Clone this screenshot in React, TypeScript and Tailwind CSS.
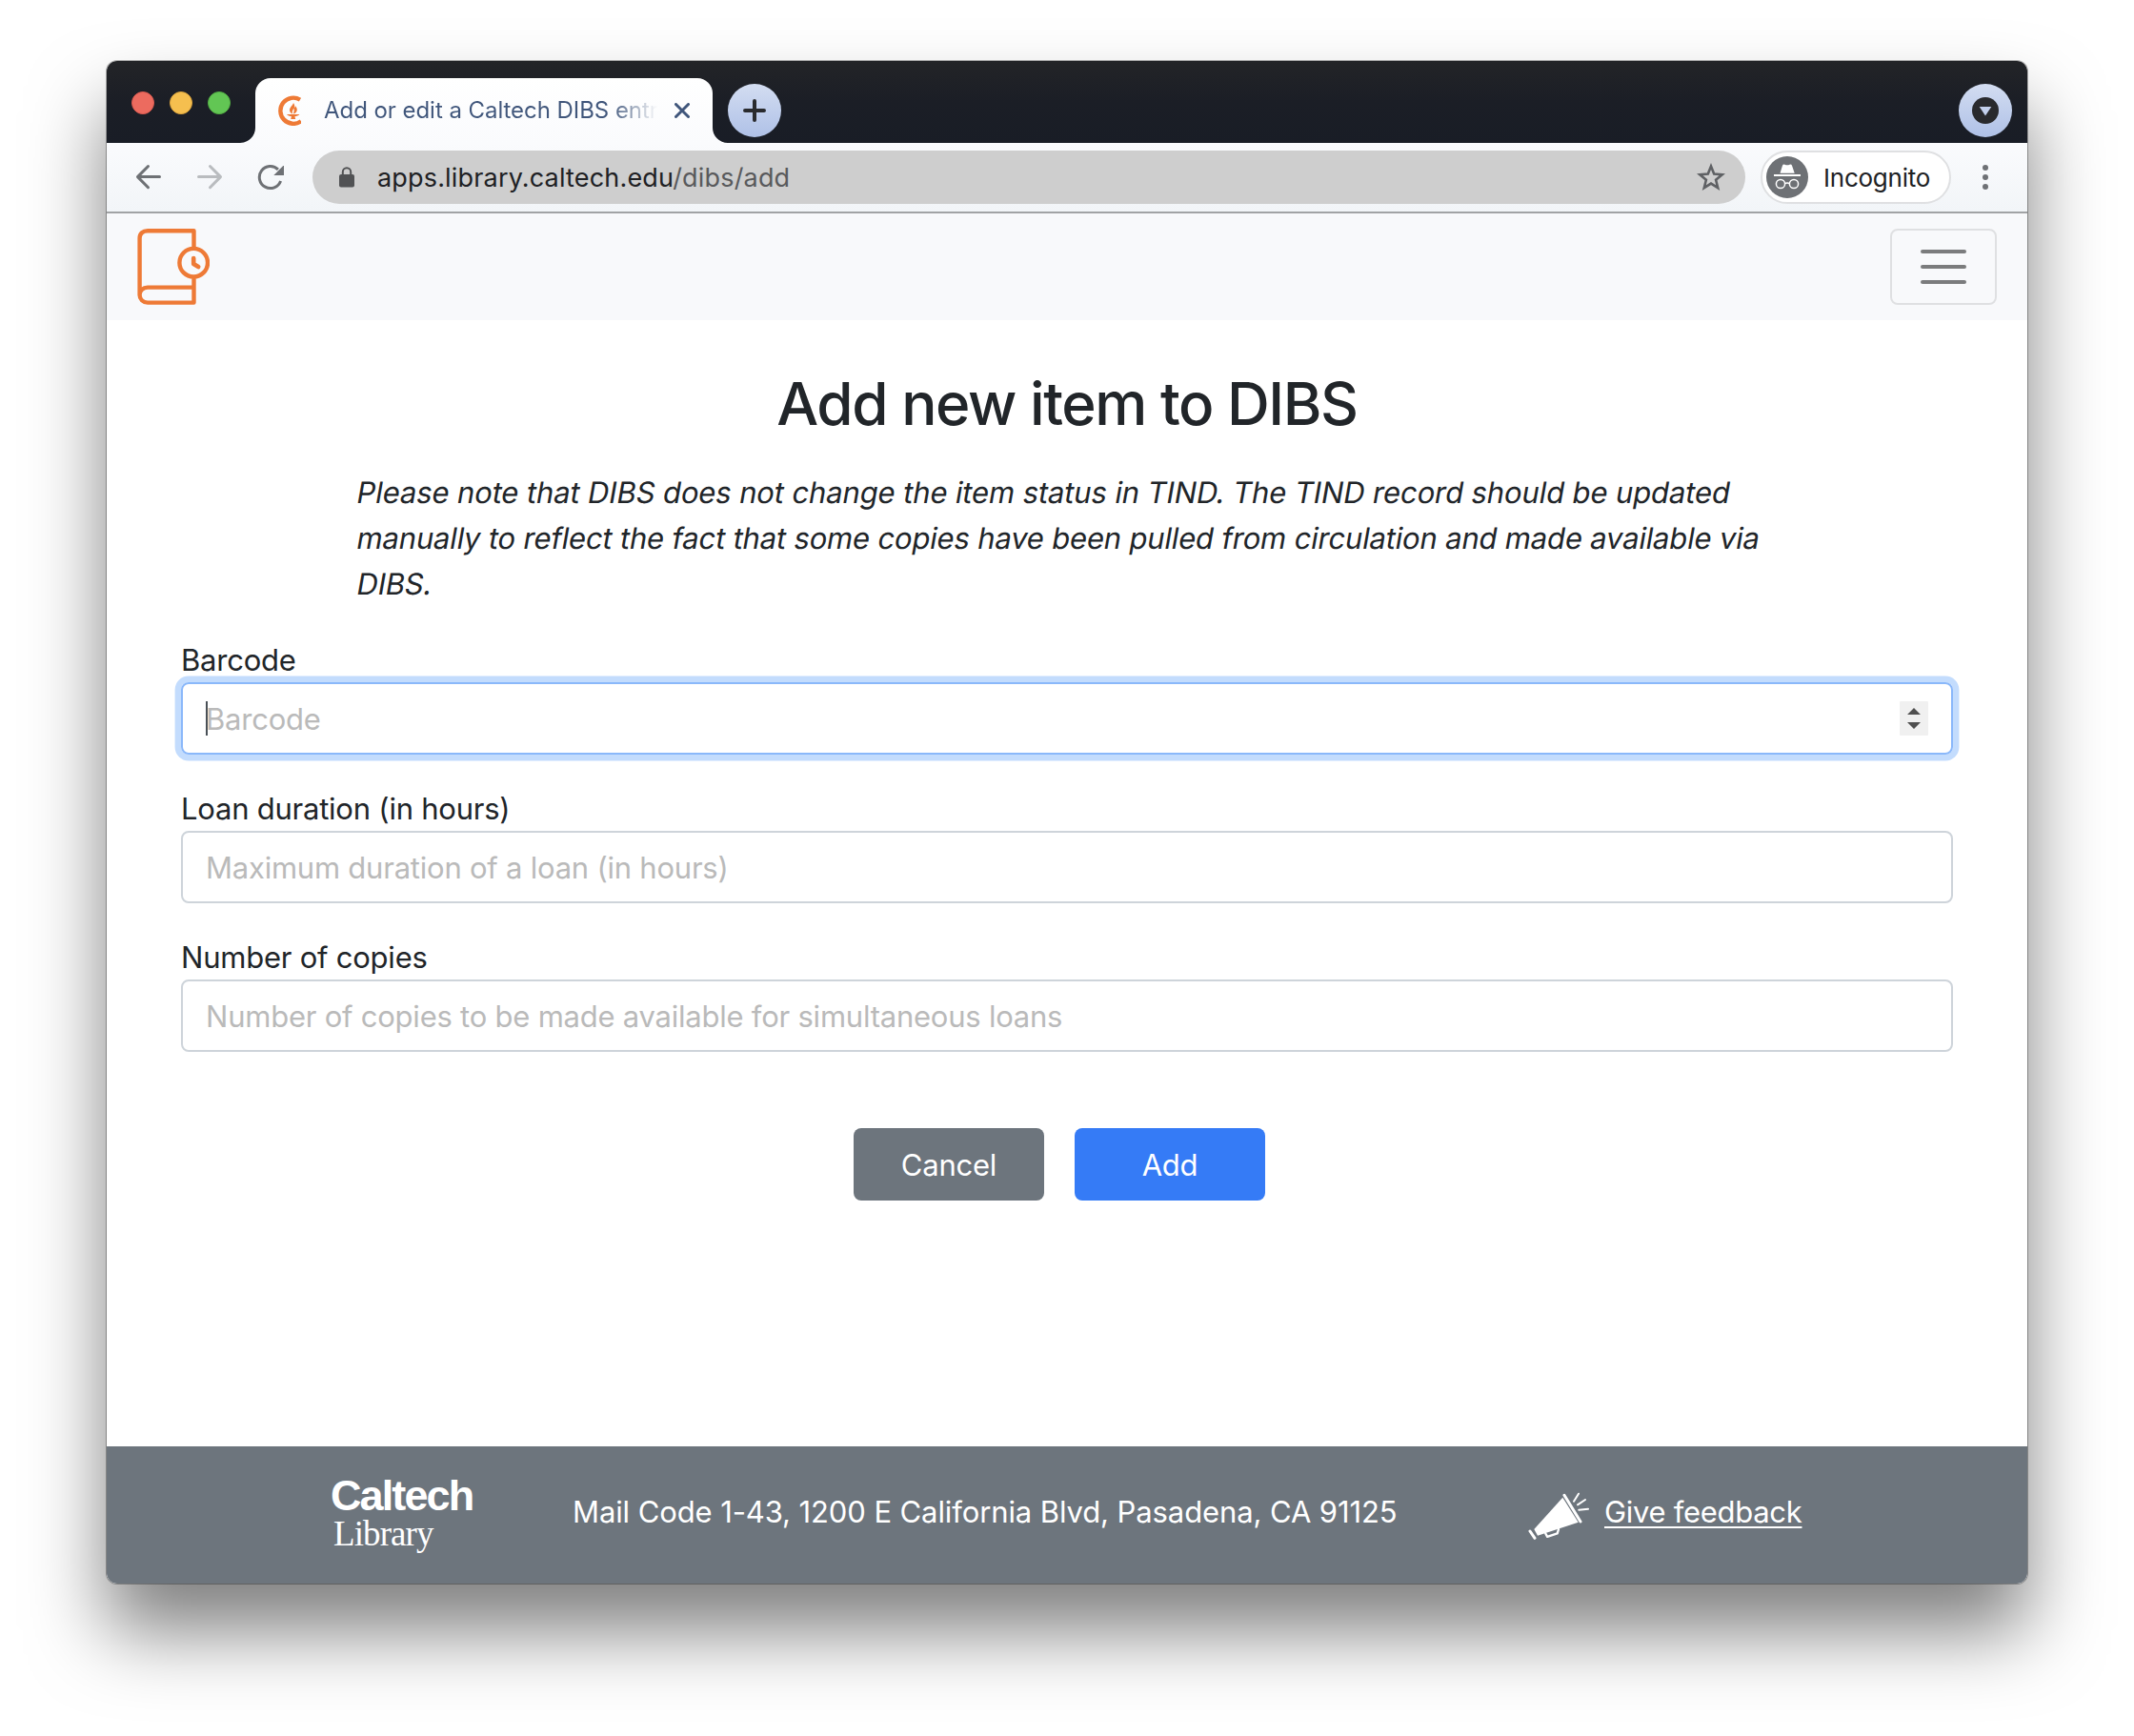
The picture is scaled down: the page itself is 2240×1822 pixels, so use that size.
import type { ReactNode } from "react";

function Favicon() {
  return (
    <svg className="h-8 w-6 shrink-0" viewBox="0 0 24 32" fill="none">
      <path d="M23 4.6A13.6 13.6 0 1 0 24 27.2" stroke="#ee7a36" strokeWidth="4.400" />
      <path d="M16 8c-.5 2.500-4 4.500-4 7.500 0 2 1.500 3.500 3.200 4-1.200-2.500.6-4 1-6 1 1.500.3 3.500-.2 6 2-.4 3.800-2 3.800-4.200 0-1.800-1-2.800-1.300-4-.2.800-.6 1.200-1.200 1.600.2-2-.3-3.700-1.300-4.900Z" fill="#ee7a36" />
      <path d="M9 20h13.400c-1.200 1.500-3 2-5 2.200l.8 2.800h-5l.8-2.800c-2-.2-3.800-.7-5-2.200Z" fill="#ee7a36" />
    </svg>
  );
}

function TabFlare({ side }: { side: "left" | "right" }) {
  return (
    <svg
      className={side === "left" ? "absolute bottom-0 -left-4 size-4" : "absolute -right-4 bottom-0 size-4"}
      viewBox="0 0 16 16"
      fill="#fafbfd"
    >
      {side === "left" ? <path d="M16 0v16H0A16 16 0 0 0 16 0Z" /> : <path d="M0 0v16h16A16 16 0 0 1 0 0Z" />}
    </svg>
  );
}

function TabStrip() {
  return (
    <div className="flex h-[86px] bg-linear-to-b from-[#232427] via-[#1b1e26] via-50% to-[#191d26] pr-4">
      <div className="flex gap-4 pt-8 pl-[26px]">
        <div className="size-6 rounded-full border border-[#dd5a50] bg-[#ec6b5f]" />
        <div className="size-6 rounded-full border border-[#dfa63c] bg-[#f5bf4f]" />
        <div className="size-6 rounded-full border border-[#52ae43] bg-[#62c654]" />
      </div>
      <div className="relative mt-[18px] ml-[26px] flex w-[480px] items-center rounded-t-2xl bg-linear-to-b from-white to-[#fafbfd] pl-6">
        <TabFlare side="left" />
        <TabFlare side="right" />
        <Favicon />
        <div className="ml-6 w-[350px] overflow-hidden bg-linear-to-r from-[#40567b] from-86% to-[#40567b]/0 bg-clip-text text-[24px] leading-9 tracking-[-0.050px] whitespace-nowrap text-transparent">
          Add or edit a Caltech DIBS entry
        </div>
        <svg className="ml-[18px] size-4 shrink-0" viewBox="0 0 16 16" stroke="#40567b" strokeWidth="3" strokeLinecap="round">
          <path d="M1.500 1.500l13 13M14.500 1.500l-13 13" />
        </svg>
      </div>
      <div className="mt-6 ml-4 flex size-14 items-center justify-center rounded-full bg-linear-to-b from-[#d3ddf1] to-[#afc1e7]">
        <svg className="size-6" viewBox="0 0 24 24" stroke="#292a2d" strokeWidth="4" strokeLinecap="round">
          <path d="M12 2v20M2 12h20" />
        </svg>
      </div>
      <div className="mt-6 ml-auto flex size-14 items-center justify-center rounded-full bg-linear-to-b from-[#d3ddf1] to-[#afc1e7]">
        <svg className="size-7" viewBox="0 0 28 28">
          <circle cx="14" cy="14" r="14" fill="#292a2d" />
          <path d="M7.700 10h12.600L14 19.500Z" fill="#c3d0ec" />
        </svg>
      </div>
    </div>
  );
}

function Incognito() {
  return (
    <svg className="size-11" viewBox="0 0 44 44">
      <circle cx="22" cy="22" r="22" fill="#6e7175" />
      <path d="M14.500 17.700 17 9.800q.7-1.900 2.500-1.100 2.500 1 5 0 1.800-.8 2.500 1.100l2.700 7.900Z" fill="#fff" />
      <path d="M8 19h28v2H8Z" fill="#fff" />
      <g fill="none" stroke="#fff" strokeWidth="1.500">
        <circle cx="15" cy="29" r="4.600" />
        <circle cx="29" cy="29" r="4.600" />
        <path d="M19.500 28.600q2.500-1.200 5 0" />
      </g>
    </svg>
  );
}

function Toolbar() {
  return (
    <div className="flex h-[74px] items-start border-b-2 border-[#a1a3a5] bg-linear-to-b from-[#fafbfd] to-[#f2f5f8] pt-2">
      <div className="flex h-14 items-center pl-[30px]">
        <svg className="size-7" viewBox="0 0 28 28" fill="none" stroke="#6e7175" strokeWidth="3" strokeLinecap="round" strokeLinejoin="round">
          <path d="M25.500 13.600H3M13.500 2.500 2.500 13.600l11 11.100" />
        </svg>
        <svg className="ml-9 size-7" viewBox="0 0 28 28" fill="none" stroke="#b9bcbf" strokeWidth="3" strokeLinecap="round" strokeLinejoin="round">
          <path d="M2.500 13.600h22.500M14.500 2.500l11 11.100-11 11.100" />
        </svg>
        <svg className="ml-9 size-7" viewBox="0 0 28 28" fill="none">
          <path d="M24.600 18A11.500 11.500 0 1 1 21.900 5.900" stroke="#6e7175" strokeWidth="3" />
          <path d="M28.300 1v11h-11Z" fill="#6e7175" />
        </svg>
      </div>
      <div className="ml-[30px] flex h-14 w-[1504px] items-center rounded-full bg-[#cecece] pr-[21px] pl-7">
        <svg className="h-[22px] w-4" viewBox="0 0 16 22">
          <rect y="8" width="16" height="13.500" rx="2" fill="#515254" />
          <path d="M3.800 9V5.500a4.200 4.200 0 0 1 8.400 0V9" fill="none" stroke="#515254" strokeWidth="2" />
        </svg>
        <div className="mt-px ml-6 text-[27px] leading-9 tracking-[0.170px] text-[#202124]">
          apps.library.caltech.edu<span className="text-[#595a5c]">/dibs/add</span>
        </div>
        <svg className="ml-auto size-[30px]" viewBox="0 0 30 30" fill="none" stroke="#5f6164" strokeWidth="2.600">
          <path d="m15 3.500 3.200 8.100 8.500.6-6.600 5.500 2.100 8.500-7.200-4.600-7.200 4.600 2.100-8.500-6.600-5.500 8.500-.6Z" />
        </svg>
      </div>
      <div className="ml-4 flex h-14 w-[200px] items-center rounded-full border-2 border-[#dfe0e2] bg-white pl-1">
        <Incognito />
        <div className="mt-px ml-4 text-[26px] leading-9 text-[#202124]">Incognito</div>
      </div>
      <div className="ml-[33px] flex h-14 flex-col items-center justify-center gap-1">
        <div className="size-1.5 rounded-full bg-[#6e7175]" />
        <div className="size-1.5 rounded-full bg-[#6e7175]" />
        <div className="size-1.5 rounded-full bg-[#6e7175]" />
      </div>
    </div>
  );
}

function NavBar() {
  return (
    <div className="flex h-28 items-center justify-between bg-[#f8f9fb] px-8">
      <svg className="h-20 w-[76px]" viewBox="0 0 76 80" fill="none" stroke="#ee7a36" strokeWidth="4.400" strokeLinecap="round" strokeLinejoin="round">
        <path d="M59.500 19V2.300H11C6 2.300 2.600 5 2.600 10v60M59.500 53v24.600H11c-5 0-8.400-3.500-8.400-8s3.400-8 8.400-8h48.500" />
        <circle cx="59.200" cy="35.700" r="14.800" />
        <path d="M59.200 31v6l5 3" strokeWidth="4.600" />
      </svg>
      <div className="flex h-20 w-28 flex-col items-center justify-center gap-3 rounded-lg border-2 border-[#dfe0e2]">
        <div className="h-1 w-12 rounded-full bg-[#7b7c7d]" />
        <div className="h-1 w-12 rounded-full bg-[#7b7c7d]" />
        <div className="h-1 w-12 rounded-full bg-[#7b7c7d]" />
      </div>
    </div>
  );
}

function Field({ label, placeholder, focused }: { label: string; placeholder: string; focused?: boolean }) {
  return (
    <div>
      <div className="h-12 pt-px leading-12">{label}</div>
      <div
        className={
          focused
            ? "flex h-[76px] items-center rounded-lg border-2 border-[#8ab8fa] pr-6 pl-6 shadow-[0_0_0_6.400px_#c3dcfd]"
            : "flex h-[76px] items-center rounded-lg border-2 border-[#ced4da] pr-6 pl-6"
        }
      >
        {focused && <div className="-mr-0.5 h-9 w-0.5 bg-[#495057]" />}
        <div className="pt-px leading-12 text-[#bababa]">{placeholder}</div>
        {focused && (
          <svg className="ml-auto h-9 w-[30px]" viewBox="0 0 30 36">
            <rect width="30" height="36" rx="1" fill="#f0f0f0" />
            <path d="M8 14h14l-7-7ZM8 22h14l-7 7Z" fill="#4f4f4f" />
          </svg>
        )}
      </div>
    </div>
  );
}

function Button({ color, children }: { color: string; children: ReactNode }) {
  return <div className={`flex h-[76px] w-[200px] items-center justify-center rounded-lg pt-0.5 text-white ${color}`}>{children}</div>;
}

function Footer() {
  return (
    <div className="mt-auto flex h-36 items-start bg-[#6d757d] pl-[235px] whitespace-nowrap text-white">
      <div className="w-[254px] pt-[29px]">
        <div className="font-['Liberation_Sans'] text-[45px] leading-[46px] font-bold tracking-[-1.900px]">Caltech</div>
        <div className="ml-[3px] font-['Liberation_Serif'] text-[37px] leading-[34px] tracking-[-0.900px]">Library</div>
      </div>
      <div className="mt-[45px] w-[1003px] leading-12 tracking-[-0.100px]">
        Mail Code 1-43, 1200 E California Blvd, Pasadena, CA 91125
      </div>
      <svg className="mt-12 h-[50px] w-16" viewBox="0 0 64 50" fill="none" stroke="#fff" strokeLinecap="round" strokeLinejoin="round">
        <path d="m6.300 39 30-33.300 16.400 26-42.700 14Z" fill="#fff" stroke="none" />
        <path d="m38 3.300 17 27.700M2 41l5 7.300" strokeWidth="3" />
        <path d="m18.300 43.500 1.900 3.400 10.500-3.500L32 39" strokeWidth="2.400" />
        <path d="m48 9.700 5-8M52 13.300 60 8M53.300 18.700l9.700-1" strokeWidth="2" />
      </svg>
      <div className="mt-[45px] ml-4 leading-12 tracking-[-0.300px] underline decoration-2 underline-offset-4">Give feedback</div>
    </div>
  );
}

export default function App() {
  return (
    <div className="h-[1822px] w-[2240px] overflow-hidden bg-white px-28 pt-16 font-['Inter',sans-serif]">
      <div className="h-[1598px] rounded-[11px] shadow-[0_0_0_1px_rgba(0,0,0,0.300),0_50px_80px_rgba(0,0,0,0.500)]">
        <div className="flex h-full flex-col overflow-hidden rounded-[11px] bg-white text-[31px] tracking-[-0.230px] text-[#212529]">
          <TabStrip />
          <Toolbar />
          <NavBar />
          <div className="mt-[49px] text-center text-[62px] leading-[77px] font-medium tracking-[-1.450px]">Add new item to DIBS</div>
          <div className="mt-[31px] pl-[263px] leading-12 whitespace-nowrap">
            <div className="origin-left -skew-x-10 tracking-[-0.120px]">
              Please note that DIBS does not change the item status in TIND. The TIND record should be updated
            </div>
            <div className="origin-left -skew-x-10 tracking-[-0.175px]">
              manually to reflect the fact that some copies have been pulled from circulation and made available via
            </div>
            <div className="origin-left -skew-x-10">DIBS.</div>
          </div>
          <div className="mx-[78px] mt-[31px] flex flex-col gap-8">
            <Field label="Barcode" placeholder="Barcode" focused />
            <Field label="Loan duration (in hours)" placeholder="Maximum duration of a loan (in hours)" />
            <Field label="Number of copies" placeholder="Number of copies to be made available for simultaneous loans" />
          </div>
          <div className="mt-20 flex justify-center gap-8 pr-4">
            <Button color="bg-[#6d757d]">Cancel</Button>
            <Button color="bg-[#357bf6]">Add</Button>
          </div>
          <Footer />
        </div>
      </div>
    </div>
  );
}
